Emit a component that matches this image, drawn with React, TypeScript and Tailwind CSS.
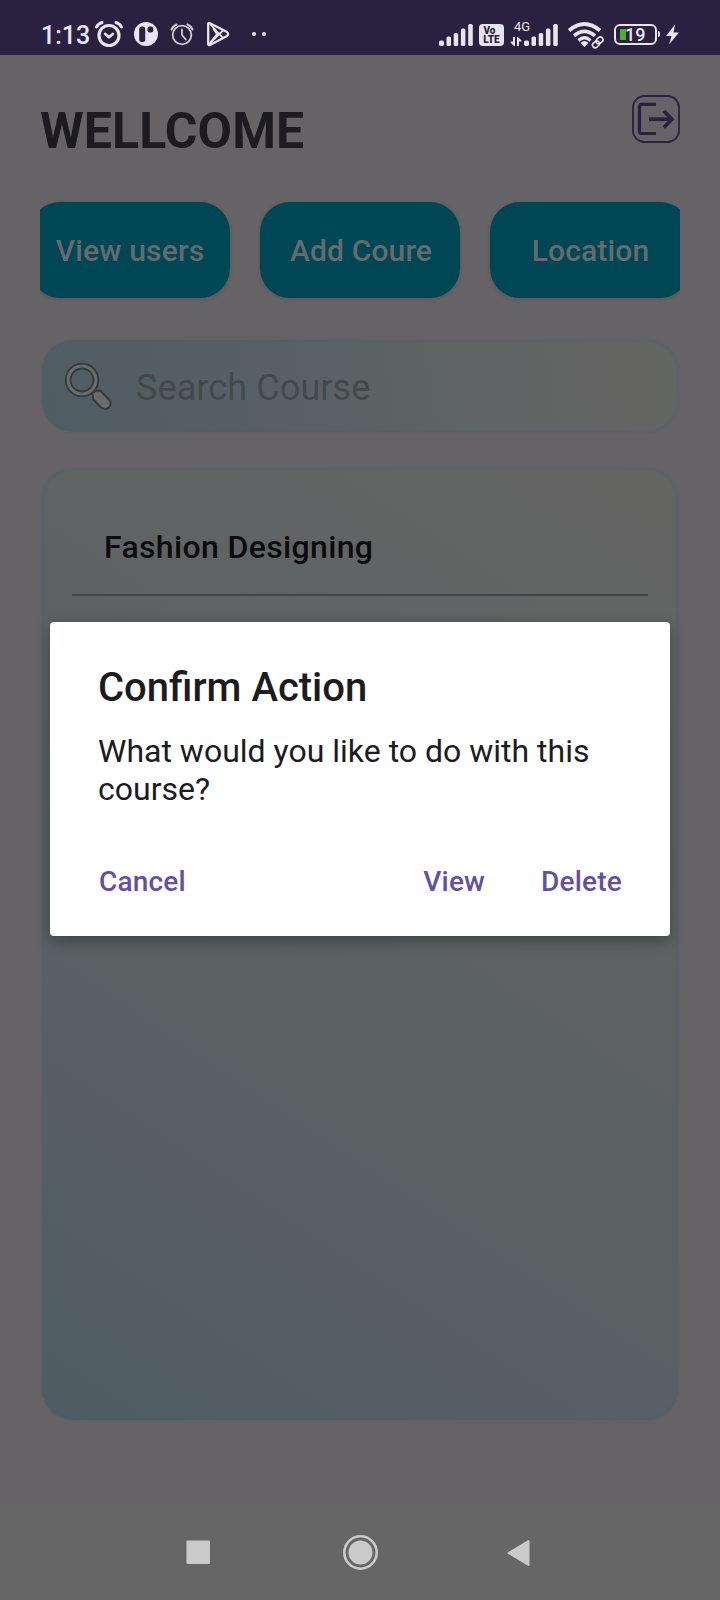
import React from "react";

const INK = "#e9e5ee";

function SignalBars() {
  return (
    <svg width="34" height="22" viewBox="0 0 34 22" fill={INK}>
      <rect x="0" y="16.5" width="5" height="5.5" rx="1.8" />
      <rect x="7.5" y="12.5" width="4.5" height="9.5" rx="1.6" />
      <rect x="14.7" y="9" width="4.5" height="13" rx="1.6" />
      <rect x="21.9" y="4.5" width="4.5" height="17.5" rx="1.6" />
      <rect x="29.2" y="0" width="4.6" height="22" rx="1.6" />
    </svg>
  );
}

function StatusBar() {
  return (
    <header className="flex h-[55px] items-start bg-[#2a2140] pt-5 text-[#e9e5ee]">
      <span className="ml-[41px] w-[53px] pt-px text-[25px] leading-[30px] font-medium">1:13</span>
      <svg width="30" height="30" viewBox="94 20 30 30" fill="none" stroke={INK} strokeLinecap="round">
        <circle cx="109" cy="35.5" r="10" strokeWidth="3.2" />
        <path d="M96.5 27 Q98.5 23.5 102 22.5 M116 22.5 Q119.5 23.5 121.5 27" strokeWidth="3" />
        <path d="M105.2 34 L109 37.3 L112.8 34" strokeWidth="2.8" strokeLinejoin="round" />
      </svg>
      <svg className="ml-[9px]" width="26" height="28" viewBox="133 20 26 28">
        <circle cx="146" cy="34" r="12" fill={INK} />
        <rect x="139.2" y="26.5" width="6" height="15.5" rx="2.5" fill="#2a2140" />
        <rect x="147.5" y="26.5" width="5.8" height="6" rx="2.3" fill="#2a2140" />
      </svg>
      <svg className="ml-[11px]" width="24" height="28" viewBox="170 20 24 28" fill="none" stroke="#cfcad6" strokeLinecap="round">
        <circle cx="182" cy="35" r="9.3" strokeWidth="1.8" />
        <path d="M171.5 29.5 Q173 26 176.5 24.5 M187.5 24.5 Q191 26 192.5 29.5" strokeWidth="2" />
        <path d="M182 29.5 V35 L185.8 39.5" strokeWidth="1.8" />
      </svg>
      <svg className="ml-3" width="24" height="28" viewBox="206 20 24 28" fill="none" stroke={INK} strokeWidth="2.3" strokeLinejoin="round" strokeLinecap="round">
        <path d="M208.2 24.2 Q208.2 22.5 210 23.2 L227 32 Q229.3 34 227 36 L210 45 Q208.2 45.7 208.2 44 Z" />
        <path d="M208.8 44.5 L223.3 30.2 M210 24 L223 38 M213.5 29 L217 34 L210 43" strokeWidth="1.8" />
      </svg>
      <svg className="ml-[21px]" width="16" height="28" viewBox="251 20 16 28" fill={INK}>
        <circle cx="254" cy="34" r="2.1" />
        <circle cx="264" cy="34" r="2.1" />
      </svg>

      <div className="ml-auto flex items-start pr-10">
        <div className="pt-1"><SignalBars /></div>
        <div className="mt-1 ml-[6px] flex h-[22px] w-[25px] flex-col items-center rounded-[4px] bg-[#e9e5ee] pt-[2px] text-[10px] leading-[9px] font-black text-[#2a2140]">
          <span className="pr-1">Vo</span>
          <span>LTE</span>
        </div>
        <div className="ml-[6px] flex h-7 w-[48px] items-start">
          <div className="flex w-[14px] flex-col">
            <span className="ml-[4px] text-[13px] leading-[13px]">4G</span>
            <svg className="mt-[4px] shrink-0" width="12" height="9" viewBox="0 0 12 9" fill={INK}>
              <path d="M3 0 H5 V9 H4 L0.5 5.5 V4.5 H3 Z" />
              <path d="M7 0 H8 L11.5 3.5 V4.5 H9 V9 H7 Z" />
            </svg>
          </div>
          <div className="pt-1"><SignalBars /></div>
        </div>
        <svg className="ml-[9px]" width="40" height="30" viewBox="567 20 40 30" fill="none" stroke={INK}>
          <path d="M569 30.5 Q584.5 17.5 600 30.5" strokeWidth="3.7" />
          <path d="M574 35.8 Q584.5 27 595 35.8" strokeWidth="3.7" />
          <path d="M578.5 40.5 Q584.5 35 590.5 40.5" strokeWidth="3.2" />
          <path d="M580.5 43 Q584.5 39 588.5 43 L584.5 47 Z" fill={INK} stroke="none" />
          <g transform="rotate(-42 598 42)" strokeWidth="1.6">
            <rect x="591.2" y="39.7" width="7.5" height="5.3" rx="2.6" />
            <rect x="596.4" y="39.2" width="7.5" height="5.3" rx="2.6" />
          </g>
        </svg>
        <div className="mt-1 ml-[7px] flex h-[21px] w-[43px] items-center rounded-[6px] border-[2.5px] border-[#e9e5ee] pl-1">
          <span className="h-[11px] w-1.5 shrink-0 bg-[#4fae23]" />
          <span className="-ml-px text-[18px] leading-[18px] font-medium">19</span>
        </div>
        <span className="mt-[11px] ml-px h-[6px] w-[2px] rounded-r bg-[#e9e5ee]" />
        <svg className="ml-[5px]" width="15" height="28" viewBox="665 20 15 28" fill={INK}>
          <path d="M675 24.5 L666 36 H671.5 L669 44.5 L679 32.5 H673.5 Z" />
        </svg>
      </div>
    </header>
  );
}

function Action({ label, className }: { label: string; className: string }) {
  return (
    <button
      className={
        "h-24 w-[200px] shrink-0 rounded-[30px] bg-[#004655] pt-px text-[30px] leading-9 font-medium tracking-[0.15px] text-[#656b6c] shadow-[0_1px_4px_rgba(0,0,0,0.15)] " +
        className
      }
    >
      {label}
    </button>
  );
}

function ConfirmDialog() {
  return (
    <div className="absolute top-[622px] left-[50px] flex h-[314px] w-[620px] flex-col rounded-[4px] bg-white px-12 pt-[42px] text-[#1c1b1f] shadow-[0_5px_16px_rgba(0,0,0,0.33)]">
      <h2 className="text-[40px] leading-[48px] font-medium">Confirm Action</h2>
      <p className="mt-5 text-[32px] leading-[38px]">
        What would you like to do with this
        <br />
        course?
      </p>
      <div className="mt-[56px] flex pl-px text-[28px] leading-9 font-medium tracking-[0.2px] text-[#65509b]">
        <button>Cancel</button>
        <button className="ml-auto">View</button>
        <button className="ml-14">Delete</button>
      </div>
    </div>
  );
}

export default function App() {
  return (
    <div className="relative flex h-[1600px] w-[720px] flex-col overflow-hidden bg-[#666367] font-['Roboto',sans-serif]">
      <StatusBar />
      <main className="flex flex-1 flex-col px-10">
        <div className="flex h-[137px] items-start justify-between">
          <h1 className="mt-[46px] text-[50px] leading-[60px] font-bold tracking-[0.1px] text-[#1c1b20]">WELLCOME</h1>
          <svg className="mt-10" width="48" height="48" viewBox="0 0 48 48" fill="none" stroke="#2a2140">
            <rect x="1" y="1" width="46" height="46" rx="11.5" strokeWidth="1.8" />
            <path d="M24 9.3 H9.5 Q7.5 9.3 7.5 11.3 V36.5 Q7.5 38.5 9.5 38.5 H24" strokeWidth="3.2" />
            <path d="M17 24.2 H39" strokeWidth="3.8" />
            <path d="M31.8 16 L40 24.2 L31.8 32.4" strokeWidth="3.6" />
          </svg>
        </div>
        <div className="flex h-[116px] gap-[30px] overflow-hidden pt-[10px]">
          <Action label="View users" className="-ml-[10px]" />
          <Action label="Add Coure" className="pl-0.5" />
          <Action label="Location" className="pl-px" />
        </div>
        <div className="mx-0.5 mt-8 flex h-[92px] items-center rounded-[31px] bg-[linear-gradient(81.5deg,#4f5d63,#565f65_30%,#5b6264_50%,#606464_70%,#646464_85%,#646663)] pl-[22px] shadow-[0_0_0_2px_#606267,inset_0_0_0_2px_rgba(78,94,112,0.3)]">
          <svg width="48" height="48" viewBox="0 0 48 48" fill="none" stroke="#333a3c">
            <path d="M28 31.5 L32.5 28.5 L36.5 29 L45.5 38 Q48 42 45 45.5 Q41.5 48.5 37.5 45.8 L29 37 V34 Z" fill="#696b6c" strokeWidth="1.8" strokeLinejoin="round" />
            <circle cx="18" cy="18" r="13.8" stroke="#6a6d6e" strokeWidth="4" />
            <circle cx="18" cy="18" r="16.3" strokeWidth="1.8" />
            <circle cx="18" cy="18" r="11.5" strokeWidth="1.8" />
          </svg>
          <span className="ml-6 pt-[3px] text-[36px] leading-[44px] tracking-[0.1px] text-[#43494b]">Search Course</span>
        </div>
        <div className="mx-0.5 mt-9 h-[952px] rounded-[31px] bg-[linear-gradient(33.9deg,#4e5c62,#525e63_13%,#565e65_18%,#585f66_31%,#596163_35%,#5c6163_50%,#5f6364_68%,#636464_85%,#646563)] px-[30px] shadow-[0_0_0_2px_#606267,inset_0_0_0_2px_rgba(78,94,112,0.3)]">
          <div className="flex h-[128px] items-end border-b-2 border-[#444546] pb-[30px]">
            <span className="ml-8 text-[32px] leading-[34px] font-medium tracking-[0.35px] text-[#0b0b0d]">Fashion Designing</span>
          </div>
        </div>
      </main>
      <nav className="flex h-24 items-start bg-[#666666]">
        <svg className="mt-8 ml-[184px]" width="30" height="32" viewBox="184 1536 30 32">
          <rect x="186.5" y="1540.5" width="23.5" height="23.5" rx="1" fill="#cacaca" />
        </svg>
        <svg className="mt-[29px] ml-32" width="38" height="38" viewBox="0 0 38 38">
          <circle cx="18.5" cy="19.5" r="16.2" fill="none" stroke="#cacaca" strokeWidth="2.6" />
          <circle cx="18.5" cy="19.5" r="12" fill="#cacaca" />
        </svg>
        <svg className="mt-8 ml-[125px]" width="28" height="32" viewBox="504 1536 28 32">
          <path d="M527.5 1541 V1565 L507.5 1553 Z" fill="#cacaca" stroke="#cacaca" strokeWidth="2" strokeLinejoin="round" />
        </svg>
      </nav>
      <ConfirmDialog />
    </div>
  );
}
